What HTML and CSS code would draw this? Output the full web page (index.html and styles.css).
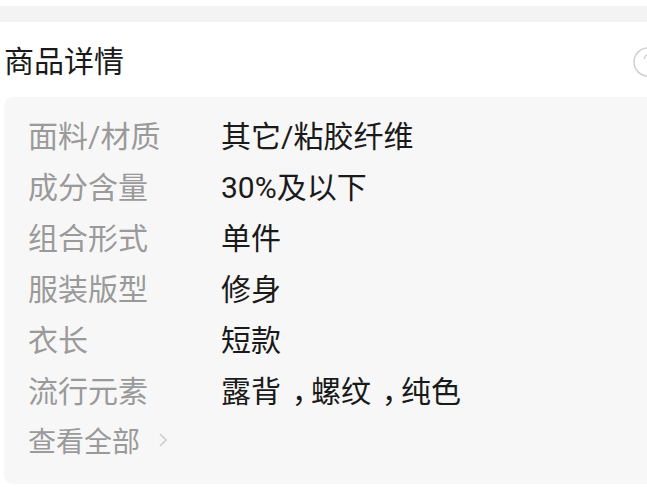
FILE: index.html
```html
<!DOCTYPE html>
<html lang="zh-CN">
<head>
<meta charset="utf-8">
<link rel="stylesheet" href="styles.css">
</head>
<body>
<div class="page">
  <div class="band"></div>
  <div class="header">
    <div class="title">商品详情</div>
    <div class="help">
      <svg width="30" height="30" viewBox="0 0 30 30"><circle cx="15" cy="15" r="14" fill="none" stroke="#d0d0d0" stroke-width="1.5"/><path d="M11.5 11.5c0-2 1.6-3.5 3.5-3.5s3.5 1.5 3.5 3.3c0 2.6-3.3 2.8-3.3 5.6" fill="none" stroke="#d0d0d0" stroke-width="1.5" stroke-linecap="round"/><circle cx="15.2" cy="21.5" r="1" fill="#d0d0d0"/></svg>
    </div>
  </div>
  <div class="card">
    <div class="row"><div class="label">面料/材质</div><div class="value">其它/粘胶纤维</div></div>
    <div class="row"><div class="label">成分含量</div><div class="value">30%及以下</div></div>
    <div class="row"><div class="label">组合形式</div><div class="value">单件</div></div>
    <div class="row"><div class="label">服装版型</div><div class="value">修身</div></div>
    <div class="row"><div class="label">衣长</div><div class="value">短款</div></div>
    <div class="row"><div class="label">流行元素</div><div class="value">露背<span class="punct">，</span>螺纹<span class="punct">，</span>纯色</div></div>
    <div class="row more"><div class="label">查看全部<svg class="chev" width="10" height="16" viewBox="0 0 10 16"><path d="M2 2l6 6-6 6" fill="none" stroke="#cccccc" stroke-width="1.5"/></svg></div></div>
  </div>
</div>
</body>
</html>
```
FILE: styles.css
```css
html, body {
  margin: 0;
  padding: 0;
  background: #ffffff;
  overflow: hidden;
}
body {
  font-family: Roboto, "Noto Sans CJK SC", sans-serif;
  width: 647px;
  height: 487px;
}
.page {
  padding-top: 6px;
}
.band {
  height: 16px;
  background: #f3f3f3;
}
.header {
  display: flex;
  align-items: center;
  justify-content: space-between;
  height: 75px;
  padding-left: 4px;
  padding-top: 4px;
  box-sizing: border-box;
  margin-right: -16px;
}
.title {
  font-size: 30px;
  color: #1a1a1a;
  line-height: 1;
}
.help {
  width: 30px;
  height: 30px;
  display: flex;
}
.card {
  background: #f7f7f7;
  border-radius: 9px;
  margin-left: 4px;
  margin-right: -20px;
  height: 387px;
  padding: 11px 0 0 24px;
  box-sizing: border-box;
}
.row {
  display: flex;
  height: 51px;
  align-items: center;
  font-size: 30px;
}
.label {
  width: 193px;
  color: #9a9a9a;
  display: flex;
  align-items: center;
}
.value {
  color: #1a1a1a;
  white-space: nowrap;
}
.punct {
  font-feature-settings: "halt";
  padding-left: 0.36em;
  padding-right: 0.14em;
}
.more .label {
  font-size: 28px;
}
.chev {
  margin-left: 18px;
}
```
